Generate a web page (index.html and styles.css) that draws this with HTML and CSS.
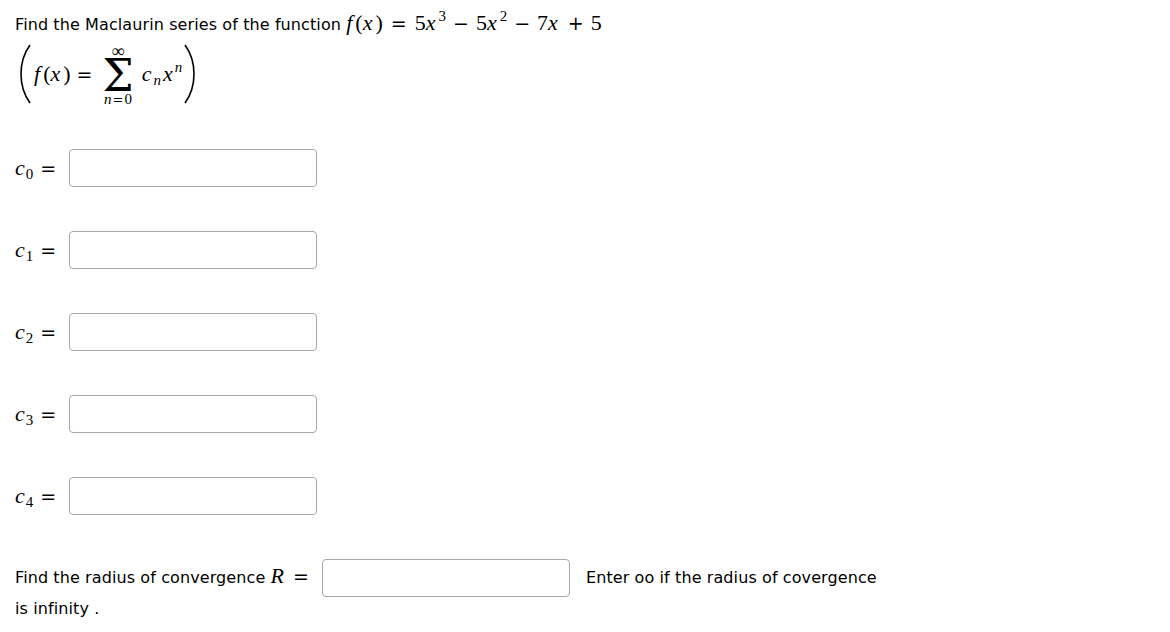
FILE: index.html
```html
<!DOCTYPE html>
<html>
<head>
<meta charset="utf-8">
<link rel="stylesheet" href="styles.css">
</head>
<body>
<div class="page">
  <p class="intro">Find the Maclaurin series of the function <span class="m"><i>f</i>(<i>x</i>)<span class="rel">=</span>5<i>x</i><sup>3</sup><span class="bin">−</span>5<i>x</i><sup>2</sup><span class="bin">−</span>7<i>x</i><span class="bin">+</span>5</span></p>
  <div class="series">
    <svg class="paren" width="14" height="60" viewBox="0 0 14 60"><path d="M12 1 C4 12 3 22 3 30 C3 38 4 48 12 59" fill="none" stroke="#000" stroke-width="1.6"/></svg>
    <span class="m fx"><i>f</i>(<i>x</i>)</span>
    <span class="m rel eq">=</span>
    <span class="sum">
      <span class="lim inf">∞</span>
      <span class="sigma">Σ</span>
      <span class="lim"><i>n</i><span class="small-eq">=</span>0</span>
    </span>
    <span class="m term"><i>c</i><sub><i>n</i></sub><i>x</i><sup><i>n</i></sup></span>
    <svg class="paren rparen" width="14" height="60" viewBox="0 0 14 60"><path d="M2 1 C10 12 11 22 11 30 C11 38 10 48 2 59" fill="none" stroke="#000" stroke-width="1.6"/></svg>
  </div>
  <div class="rows">
    <div class="row"><span class="m lbl"><i>c</i><sub>0</sub><span class="rel">=</span></span><input class="box" type="text"></div>
    <div class="row"><span class="m lbl"><i>c</i><sub>1</sub><span class="rel">=</span></span><input class="box" type="text"></div>
    <div class="row"><span class="m lbl"><i>c</i><sub>2</sub><span class="rel">=</span></span><input class="box" type="text"></div>
    <div class="row"><span class="m lbl"><i>c</i><sub>3</sub><span class="rel">=</span></span><input class="box" type="text"></div>
    <div class="row"><span class="m lbl"><i>c</i><sub>4</sub><span class="rel">=</span></span><input class="box" type="text"></div>
  </div>
  <p class="radius">Find the radius of convergence <span class="m"><i>R</i><span class="rel">=</span></span><input class="box rbox" type="text"><span class="hint">Enter oo if the radius of covergence is infinity .</span></p>
</div>
</body>
</html>
```

FILE: styles.css
```css
html, body {
  margin: 0;
  padding: 0;
  background: #fff;
}
.page {
  padding: 0 15px;
  font-family: "DejaVu Sans", "Open Sans", sans-serif;
  font-size: 16px;
  letter-spacing: 0.1px;
  color: #000;
}
.intro {
  margin: 0;
  padding-top: 11px;
  height: 24px;
  line-height: 24px;
  white-space: nowrap;
}
.m {
  font-family: "Liberation Serif", "DejaVu Serif", serif;
  font-size: 22px;
  letter-spacing: 0;
}
.m i {
  font-style: italic;
  margin-right: 3px;
}
.m sup, .m sub {
  font-size: 15px;
  line-height: 0;
}
.m sup {
  vertical-align: 9px;
}
.m sub {
  vertical-align: -4px;
}
.rel, .bin {
  font-family: "DejaVu Sans", sans-serif;
  font-size: 19px;
  font-weight: normal;
}
.rel {
  margin: 0 8px;
}
.bin {
  margin: 0 7px;
}
.series {
  display: flex;
  align-items: center;
  margin-top: 9px;
  height: 60px;
}
.paren {
  display: block;
  margin-left: 3px;
}
.rparen {
  margin-left: 1px;
}
.fx {
  margin-left: 2px;
}
.series .eq {
  margin: 0 10px 0 6px;
}
.sum {
  display: flex;
  flex-direction: column;
  align-items: center;
  font-family: "Liberation Serif", "DejaVu Serif", serif;
  line-height: 1;
  margin-top: 2px;
}
.lim {
  font-size: 15px;
  height: 13px;
  line-height: 13px;
}
.lim i {
  font-style: italic;
}
.small-eq {
  font-family: "DejaVu Sans", sans-serif;
  font-size: 13px;
  margin: 0 1px;
}
.inf {
  font-size: 18px;
  margin-bottom: 3px;
}
.sigma {
  font-family: "DejaVu Serif", serif;
  font-size: 44px;
  line-height: 30px;
  height: 32px;
}
.term {
  margin: 0 0 0 8px;
}
.term i {
  margin-right: 2px;
}
.term sup i {
  margin-right: 0;
}
.rows {
  display: flex;
  flex-direction: column;
  gap: 44px;
  margin-top: 45px;
}
.row {
  display: flex;
  align-items: center;
  height: 38px;
}
.lbl {
  width: 54px;
  padding-left: 0;
}
.lbl i {
  margin-right: 1px;
}
.lbl .rel {
  margin-left: 7px;
}
.box {
  box-sizing: border-box;
  width: 248px;
  height: 38px;
  border: 1px solid #a8a8a8;
  border-radius: 4px;
  margin: 0;
  padding: 0 8px;
  background: #fff;
}
.radius {
  margin: 44px 0 0;
  line-height: 24px;
  width: 876px;
}
.radius .rel {
  margin: 0 6px;
}
.radius .box {
  vertical-align: middle;
  margin-left: 7px;
}
.hint {
  margin-left: 16px;
}
```
